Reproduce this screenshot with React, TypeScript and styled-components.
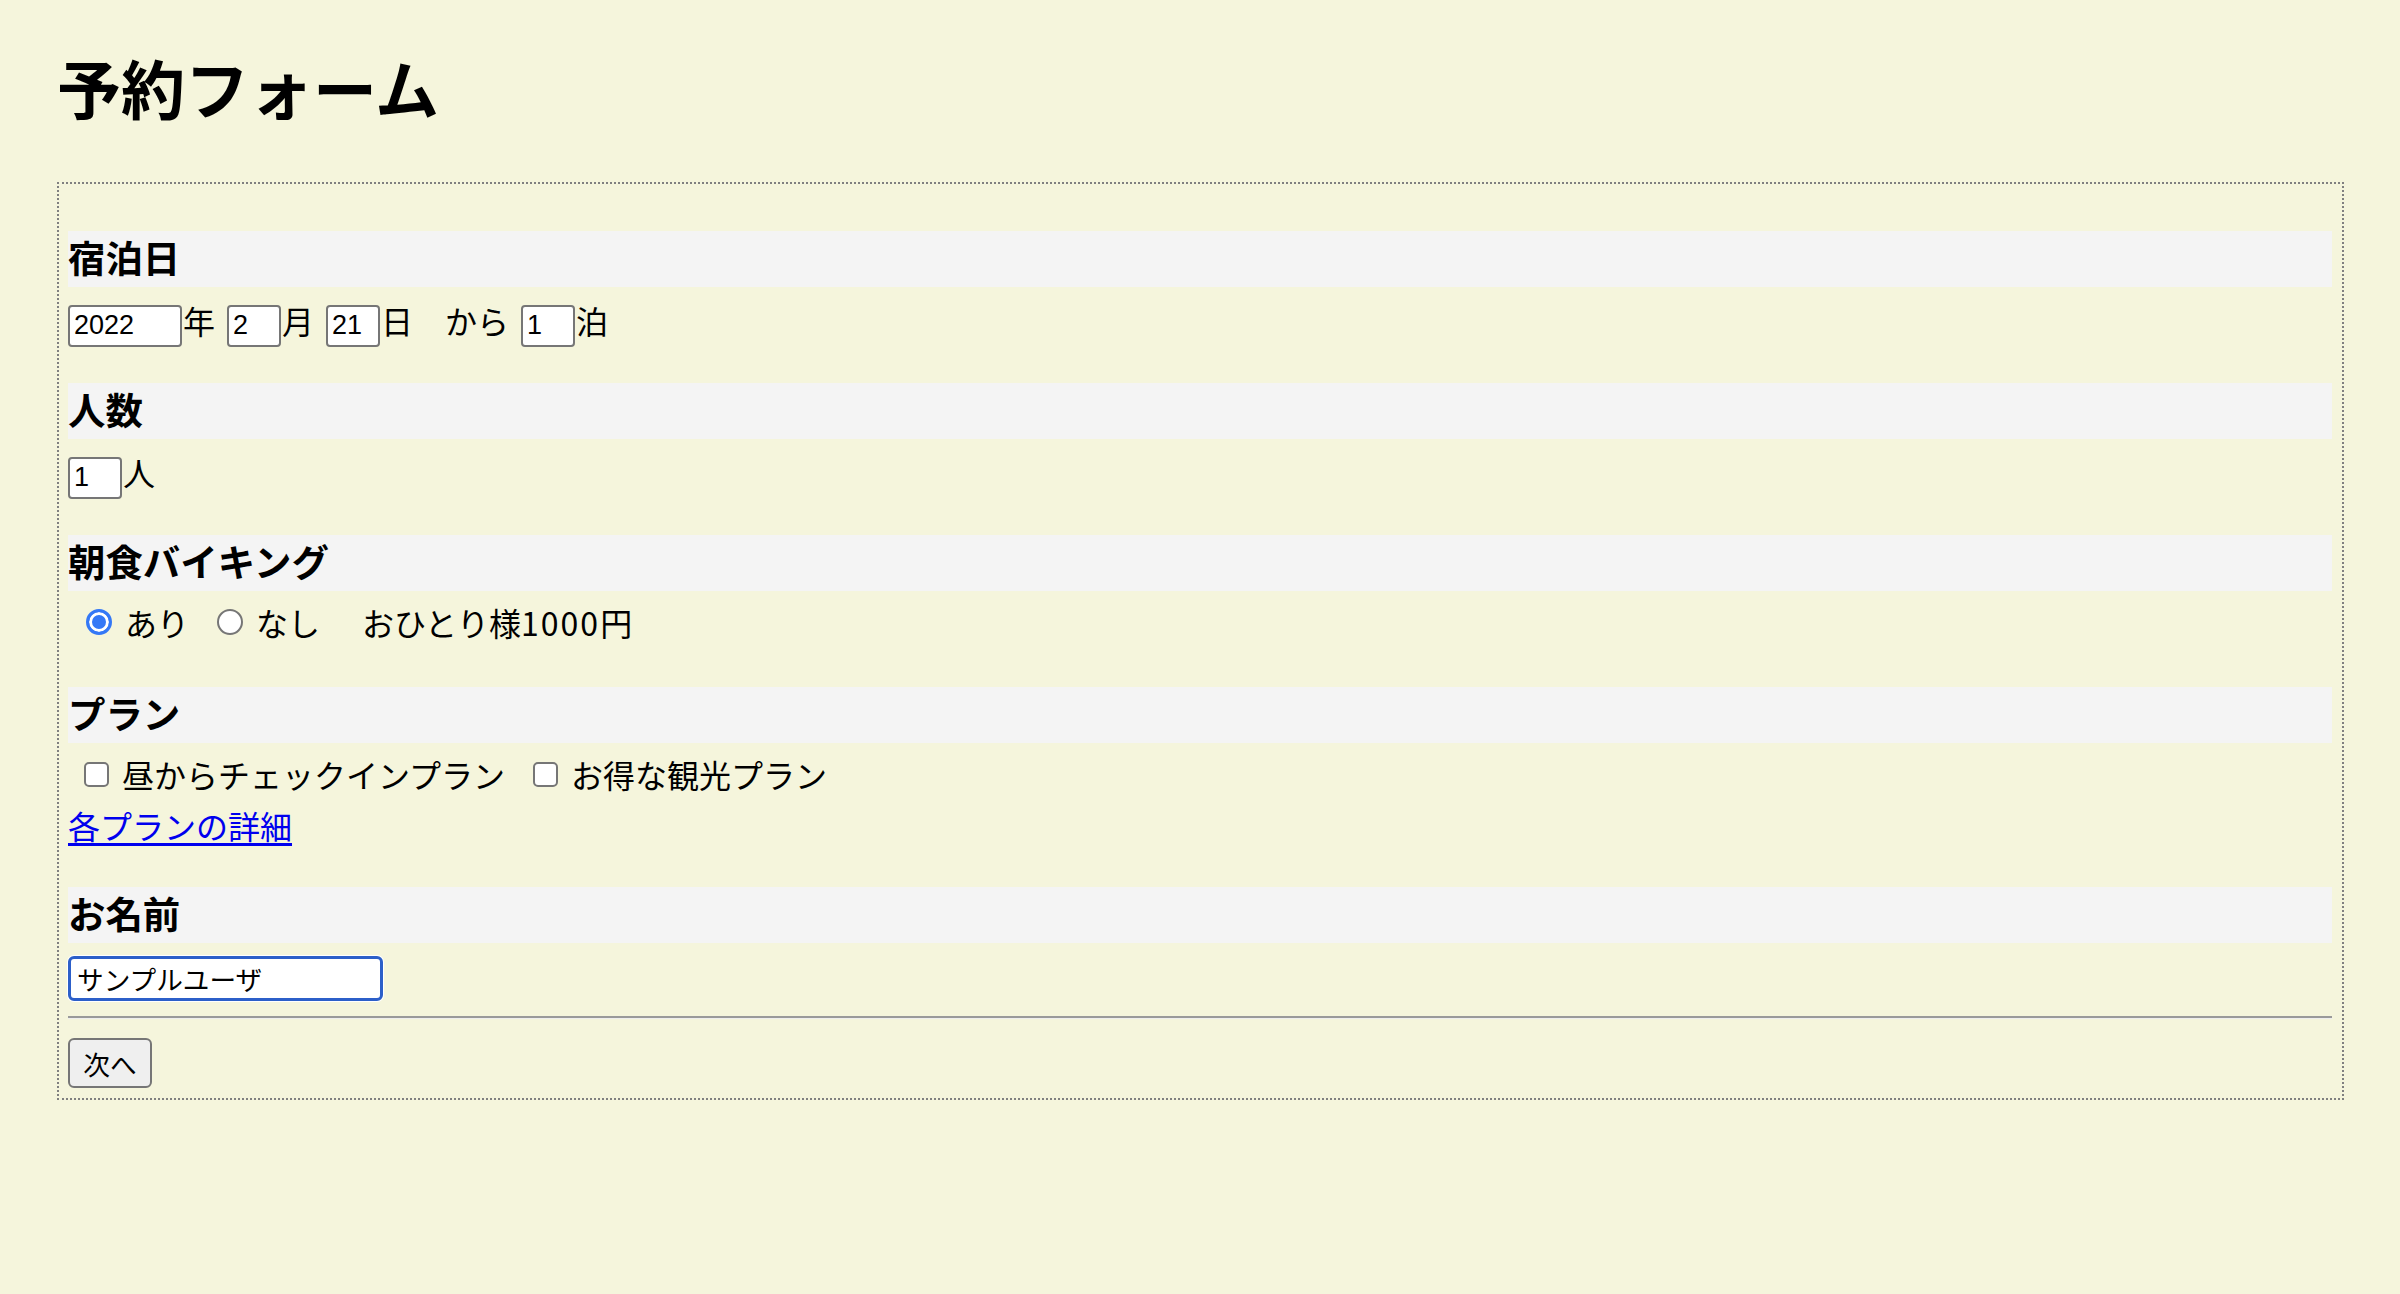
import React from "react"
import styled, { createGlobalStyle } from "styled-components"

const GlobalStyle = createGlobalStyle`
  html, body {
    margin: 0;
    background: #f5f5dc;
  }
  body {
    font-family: "Noto Sans CJK JP", sans-serif;
    font-size: 32px;
    color: #000;
  }
`

export default function App() {
  return (
    <>
      <GlobalStyle />
      <Page>
        <Title>予約フォーム</Title>
        <Form onSubmit={(e) => e.preventDefault()}>
          <Section>
            <SectionTitle>宿泊日</SectionTitle>
            <Row>
              <TextInput $w={114} defaultValue="2022" />
              <Unit>年</Unit>
              <TextInput $w={54} defaultValue="2" />
              <Unit>月</Unit>
              <TextInput $w={54} defaultValue="21" />
              <Unit>日</Unit>
              <Unit $before={20}>から</Unit>
              <TextInput $w={54} defaultValue="1" />
              <Unit $after={0}>泊</Unit>
            </Row>
          </Section>

          <Section>
            <SectionTitle>人数</SectionTitle>
            <Row>
              <TextInput $w={54} defaultValue="1" />
              <Unit $after={0}>人</Unit>
            </Row>
          </Section>

          <Section>
            <SectionTitle>朝食バイキング</SectionTitle>
            <ChoiceRow>
              <Choice $first={18}>
                <Radio type="radio" name="breakfast" defaultChecked />
                あり
              </Choice>
              <Choice>
                <Radio type="radio" name="breakfast" />
                なし
              </Choice>
              <Note>
                おひとり様<Price>1000</Price>円
              </Note>
            </ChoiceRow>
          </Section>

          <Section>
            <SectionTitle>プラン</SectionTitle>
            <ChoiceRow>
              <Choice $first={16}>
                <Checkbox type="checkbox" />
                昼からチェックインプラン
              </Choice>
              <Choice>
                <Checkbox type="checkbox" />
                お得な観光プラン
              </Choice>
            </ChoiceRow>
            <LinkLine>
              <DetailLink href="#">各プランの詳細</DetailLink>
            </LinkLine>
          </Section>

          <Section>
            <SectionTitle>お名前</SectionTitle>
            <Row $align="flex-end">
              <NameInput defaultValue="サンプルユーザ" />
            </Row>
          </Section>

          <Divider />
          <NextButton type="submit">次へ</NextButton>
        </Form>
      </Page>
    </>
  )
}

const Page = styled.main`
  padding: 54px 56px 0 57px;
`
const Title = styled.h1`
  margin: 0 0 64px;
  font-size: 64px;
  line-height: 64px;
  font-weight: 700;
`
const Form = styled.form`
  border: 2px dotted #808080;
  padding: 47px 10px 10px 9px;
`
const Section = styled.section`
  margin-bottom: 38px;
  &:last-of-type {
    margin-bottom: 0;
  }
`
const SectionTitle = styled.h3`
  margin: 0;
  height: 56px;
  line-height: 52px;
  font-size: 37.44px;
  font-weight: 700;
  background: #f4f4f4;
`
const Row = styled.div<{ $align?: string }>`
  display: flex;
  align-items: ${(p) => p.$align ?? "baseline"};
  height: 50px;
  margin-top: 8px;
  line-height: 50px;
`
const ChoiceRow = styled(Row)`
  box-sizing: border-box;
  align-items: center;
  padding-bottom: 4px;
`
const TextInput = styled.input<{ $w: number }>`
  box-sizing: border-box;
  width: ${(p) => p.$w}px;
  height: 42px;
  margin: 0;
  padding: 2px 4px;
  border: 2px solid #767676;
  border-radius: 4px;
  background: #fff;
  font-family: "Liberation Sans", "Noto Sans CJK JP", sans-serif;
  font-size: 27px;
  color: #000;
  outline: none;
`
const Unit = styled.span<{ $before?: number; $after?: number }>`
  margin-left: ${(p) => p.$before ?? 1}px;
  margin-right: ${(p) => p.$after ?? 12}px;
`
const Choice = styled.label<{ $first?: number }>`
  display: inline-flex;
  align-items: center;
  gap: 13px;
  margin-left: ${(p) => p.$first ?? 28}px;
`
const Radio = styled.input`
  appearance: none;
  box-sizing: border-box;
  width: 26px;
  height: 26px;
  margin: 0;
  border: 2px solid #767676;
  border-radius: 50%;
  background: #fff;
  &:checked {
    border: 3px solid #3478f6;
    background: #3478f6;
    box-shadow: inset 0 0 0 3px #fff;
  }
`
const Checkbox = styled.input`
  appearance: none;
  box-sizing: border-box;
  width: 25px;
  height: 25px;
  margin: 0;
  border: 2px solid #767676;
  border-radius: 5px;
  background: #fff;
`
const Note = styled.span`
  margin-left: 42px;
`
const Price = styled.span`
  letter-spacing: 2px;
`
const LinkLine = styled.div`
  line-height: 48px;
  height: 48px;
`
const DetailLink = styled.a`
  color: #0000ee;
  text-decoration: underline;
  text-decoration-thickness: 3px;
  text-underline-offset: 4px;
`
const NameInput = styled.input`
  box-sizing: border-box;
  width: 315px;
  height: 45px;
  margin: 0;
  padding: 0 6px;
  border: 3px solid #2c5fc9;
  border-radius: 6px;
  box-shadow: 0 0 0 1px #fff;
  background: #fff;
  font-family: "Liberation Sans", "Noto Sans CJK JP", sans-serif;
  font-size: 26.67px;
  color: #000;
  outline: none;
`
const Divider = styled.hr`
  margin: 15px 0 19px;
  height: 0;
  border: 0;
  border-top: 2px solid #9a9a9a;
  border-bottom: 1px solid #eeeeee;
`
const NextButton = styled.button`
  display: block;
  box-sizing: border-box;
  width: 84px;
  height: 50px;
  padding: 0;
  border: 2px solid #767676;
  border-radius: 6px;
  background: #efefef;
  font-family: "Noto Sans CJK JP", sans-serif;
  font-size: 26.67px;
  color: #000;
`
